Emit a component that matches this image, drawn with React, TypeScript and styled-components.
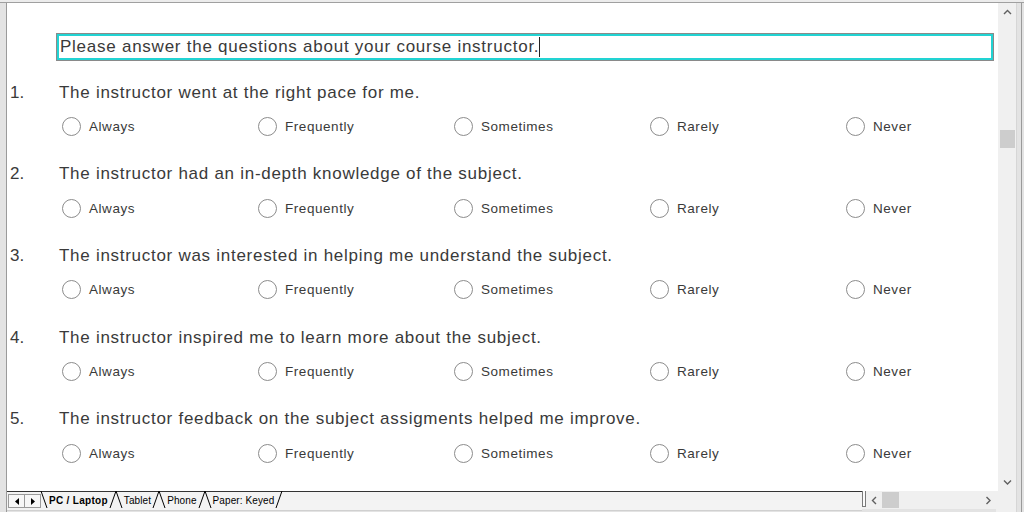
import React from "react";
import styled, { createGlobalStyle } from "styled-components";

const Global = createGlobalStyle`
  html, body { margin: 0; padding: 0; background: #ffffff; }
  body { width: 1024px; height: 512px; overflow: hidden; font-family: "Liberation Sans", Arial, sans-serif; }
`;

const Window = styled.div`
  width: 1024px;
  height: 512px;
  display: flex;
  flex-direction: column;
  background: #e6e6e6;
  box-sizing: border-box;
  border-top: 2px solid #ececec;
`;

const MainRow = styled.div`
  display: flex;
  height: 488px;
  border-top: 1px solid #a0a0a0;
`;

const LeftEdge = styled.div`
  width: 6px;
  background: #e3e3e3;
  border-right: 1px solid #9a9a9a;
`;

const Sheet = styled.div`
  flex: 1;
  background: #ffffff;
  padding: 30px 4px 0 3px;
  display: flex;
  flex-direction: column;
  overflow: hidden;
`;

const Instruction = styled.div`
  margin-left: 46px;
  height: 28px;
  box-sizing: border-box;
  border: 1px solid #8a8a8a;
  box-shadow: inset 0 0 0 2px #22d3d3;
  display: flex;
  align-items: center;
  padding-left: 3px;
  font-size: 17px;
  letter-spacing: 0.75px;
  color: #3a3a3a;
  white-space: nowrap;
`;

const Caret = styled.span`
  display: inline-block;
  width: 1px;
  height: 20px;
  background: #222;
`;

const QuestionList = styled.div`
  margin-top: 22px;
  display: flex;
  flex-direction: column;
`;

const Question = styled.div`
  display: flex;
  flex-direction: column;
  height: 81.7px;
`;

const Title = styled.div`
  display: flex;
  height: 20px;
  align-items: center;
  font-size: 17px;
  color: #3a3a3a;
  white-space: nowrap;
`;

const Num = styled.span`
  width: 49px;
  flex: none;
`;

const TitleText = styled.span`
  letter-spacing: 0.72px;
`;

const Options = styled.div`
  display: flex;
  margin-top: 14px;
  margin-left: 52px;
  height: 20px;
  align-items: center;
`;

const Option = styled.label`
  width: 196px;
  flex: none;
  display: flex;
  align-items: center;
  gap: 8px;
  font-size: 13.5px;
  letter-spacing: 0.55px;
  color: #3a3a3a;
  white-space: nowrap;
`;

const Radio = styled.span`
  width: 19px;
  height: 19px;
  box-sizing: border-box;
  border-radius: 50%;
  border: 1.6px solid #8c8c8c;
  background: #fff;
  flex: none;
`;

const VScroll = styled.div`
  width: 18px;
  background: #f0f0f0;
  display: flex;
  flex-direction: column;
  align-items: center;
`;

const ArrowBox = styled.div`
  height: 18px;
  display: flex;
  align-items: center;
  justify-content: center;
  width: 100%;
`;

const VTrack = styled.div`
  flex: 1;
  width: 100%;
  display: flex;
  flex-direction: column;
  align-items: center;
`;

const VThumb = styled.div`
  margin-top: 109px;
  width: 15px;
  height: 18px;
  background: #cdcdcd;
`;

const RightEdge = styled.div`
  width: 8px;
  background: #e3e3e3;
  border-left: 1px solid #d6d6d6;
  box-sizing: border-box;
  display: flex;
  justify-content: center;
`;

const RightLine = styled.div`
  width: 1px;
  margin-left: 2px;
  background: #9a9a9a;
`;

const BottomRow = styled.div`
  display: flex;
  height: 21px;
  background: #e3e3e3;
`;

const BottomLeftEdge = styled.div`
  width: 6px;
  background: #e3e3e3;
  border-right: 1px solid #9a9a9a;
`;

const TabStrip = styled.div`
  width: 855px;
  height: 18px;
  background: #f3f3f3;
  border-top: 1px solid #333;
  border-bottom: 1px solid #d0d0d0;
  display: flex;
  align-items: stretch;
`;

const NavGroup = styled.div`
  display: flex;
  margin: 2px 0 2px 1px;
  border: 1px solid #9a9a9a;
  background: #f7f7f7;
`;

const NavBtn = styled.div<{ $last?: boolean }>`
  width: 15px;
  display: flex;
  align-items: center;
  justify-content: center;
  border-right: ${(p) => (p.$last ? "none" : "1px solid #9a9a9a")};
`;

const Tabs = styled.div`
  display: flex;
`;

const Tab = styled.div<{ $active?: boolean; $z: number }>`
  position: relative;
  z-index: ${(p) => p.$z};
  padding: 0 8px;
  font-size: 10px;
  letter-spacing: ${(p) => (p.$active ? "0.3px" : "0.1px")};
  font-weight: ${(p) => (p.$active ? 700 : 400)};
  color: #000;
  display: flex;
  align-items: center;
  height: 18px;
  margin-top: -1px;
`;

const Edge = styled.svg<{ $side: "left" | "right" }>`
  position: absolute;
  top: 0;
  ${(p) => (p.$side === "left" ? "left: 0;" : "right: 0;")}
  width: 6px;
  height: 17px;
  overflow: visible;
`;

const TabLabel = styled.span`
  position: relative;
`;

const HScroll = styled.div`
  flex: 1;
  height: 18px;
  background: #f0f0f0;
  display: flex;
  align-items: center;
`;

const Splitter = styled.div`
  width: 4px;
  height: 16px;
  border: 1px solid #7a7a7a;
  border-top: none;
  background: #fafafa;
  margin-top: -2px;
  box-sizing: border-box;
`;

const HArrow = styled.div`
  width: 16px;
  height: 18px;
  display: flex;
  align-items: center;
  justify-content: center;
`;

const HThumb = styled.div`
  width: 17px;
  height: 16px;
  background: #cdcdcd;
`;

const HTrack = styled.div`
  flex: 1;
  display: flex;
  align-items: center;
`;

const Corner = styled.div`
  width: 20px;
  background: #f0f0f0;
`;

const Chevron = ({ dir }: { dir: "up" | "down" | "left" | "right" }) => {
  const paths: Record<string, string> = {
    up: "M1 5 L4.5 1.5 L8 5",
    down: "M1 1.5 L4.5 5 L8 1.5",
    left: "M5 1 L1.5 4.5 L5 8",
    right: "M1.5 1 L5 4.5 L1.5 8",
  };
  const vertical = dir === "up" || dir === "down";
  return (
    <svg width={vertical ? 9 : 7} height={vertical ? 7 : 9} viewBox={vertical ? "0 0 9 7" : "0 0 7 9"}>
      <path d={paths[dir]} fill="none" stroke="#606060" strokeWidth="1.4" />
    </svg>
  );
};

const Tri = ({ left }: { left?: boolean }) => (
  <svg width="4" height="7" viewBox="0 0 4 7">
    <path d={left ? "M4 0 L0 3.5 L4 7 Z" : "M0 0 L4 3.5 L0 7 Z"} fill="#000" />
  </svg>
);

const options = ["Always", "Frequently", "Sometimes", "Rarely", "Never"];
const questions = [
  "The instructor went at the right pace for me.",
  "The instructor had an in-depth knowledge of the subject.",
  "The instructor was interested in helping me understand the subject.",
  "The instructor inspired me to learn more about the subject.",
  "The instructor feedback on the subject assigments helped me improve.",
];

const tabs = ["PC / Laptop", "Tablet", "Phone", "Paper: Keyed"];

export default function App() {
  return (
    <>
      <Global />
      <Window>
        <MainRow>
          <LeftEdge />
          <Sheet>
            <Instruction>
              Please answer the questions about your course instructor.
              <Caret />
            </Instruction>
            <QuestionList>
              {questions.map((q, i) => (
                <Question key={i}>
                  <Title>
                    <Num>{i + 1}.</Num>
                    <TitleText>{q}</TitleText>
                  </Title>
                  <Options>
                    {options.map((o) => (
                      <Option key={o}>
                        <Radio />
                        {o}
                      </Option>
                    ))}
                  </Options>
                </Question>
              ))}
            </QuestionList>
          </Sheet>
          <VScroll>
            <ArrowBox>
              <Chevron dir="up" />
            </ArrowBox>
            <VTrack>
              <VThumb />
            </VTrack>
            <ArrowBox>
              <Chevron dir="down" />
            </ArrowBox>
          </VScroll>
          <RightEdge>
            <RightLine />
          </RightEdge>
        </MainRow>
        <BottomRow>
          <BottomLeftEdge />
          <TabStrip>
            <NavGroup>
              <NavBtn>
                <Tri left />
              </NavBtn>
              <NavBtn $last>
                <Tri />
              </NavBtn>
            </NavGroup>
            <Tabs>
              {tabs.map((t, i) => (
                <Tab key={t} $active={i === 0} $z={i === 0 ? 10 : 5 - i}>
                  <Edge $side="left" viewBox="0 0 6 17">
                    <line x1="0" y1="0" x2="6" y2="17" stroke="#000" strokeWidth="1" />
                  </Edge>
                  <Edge $side="right" viewBox="0 0 6 17">
                    <line x1="0" y1="17" x2="6" y2="0" stroke="#000" strokeWidth="1" />
                  </Edge>
                  <TabLabel>{t}</TabLabel>
                </Tab>
              ))}
            </Tabs>
          </TabStrip>
          <HScroll>
            <Splitter />
            <HArrow>
              <Chevron dir="left" />
            </HArrow>
            <HTrack>
              <HThumb />
            </HTrack>
            <HArrow>
              <Chevron dir="right" />
            </HArrow>
          </HScroll>
          <Corner />
          <RightEdge>
            <RightLine />
          </RightEdge>
        </BottomRow>
      </Window>
    </>
  );
}
